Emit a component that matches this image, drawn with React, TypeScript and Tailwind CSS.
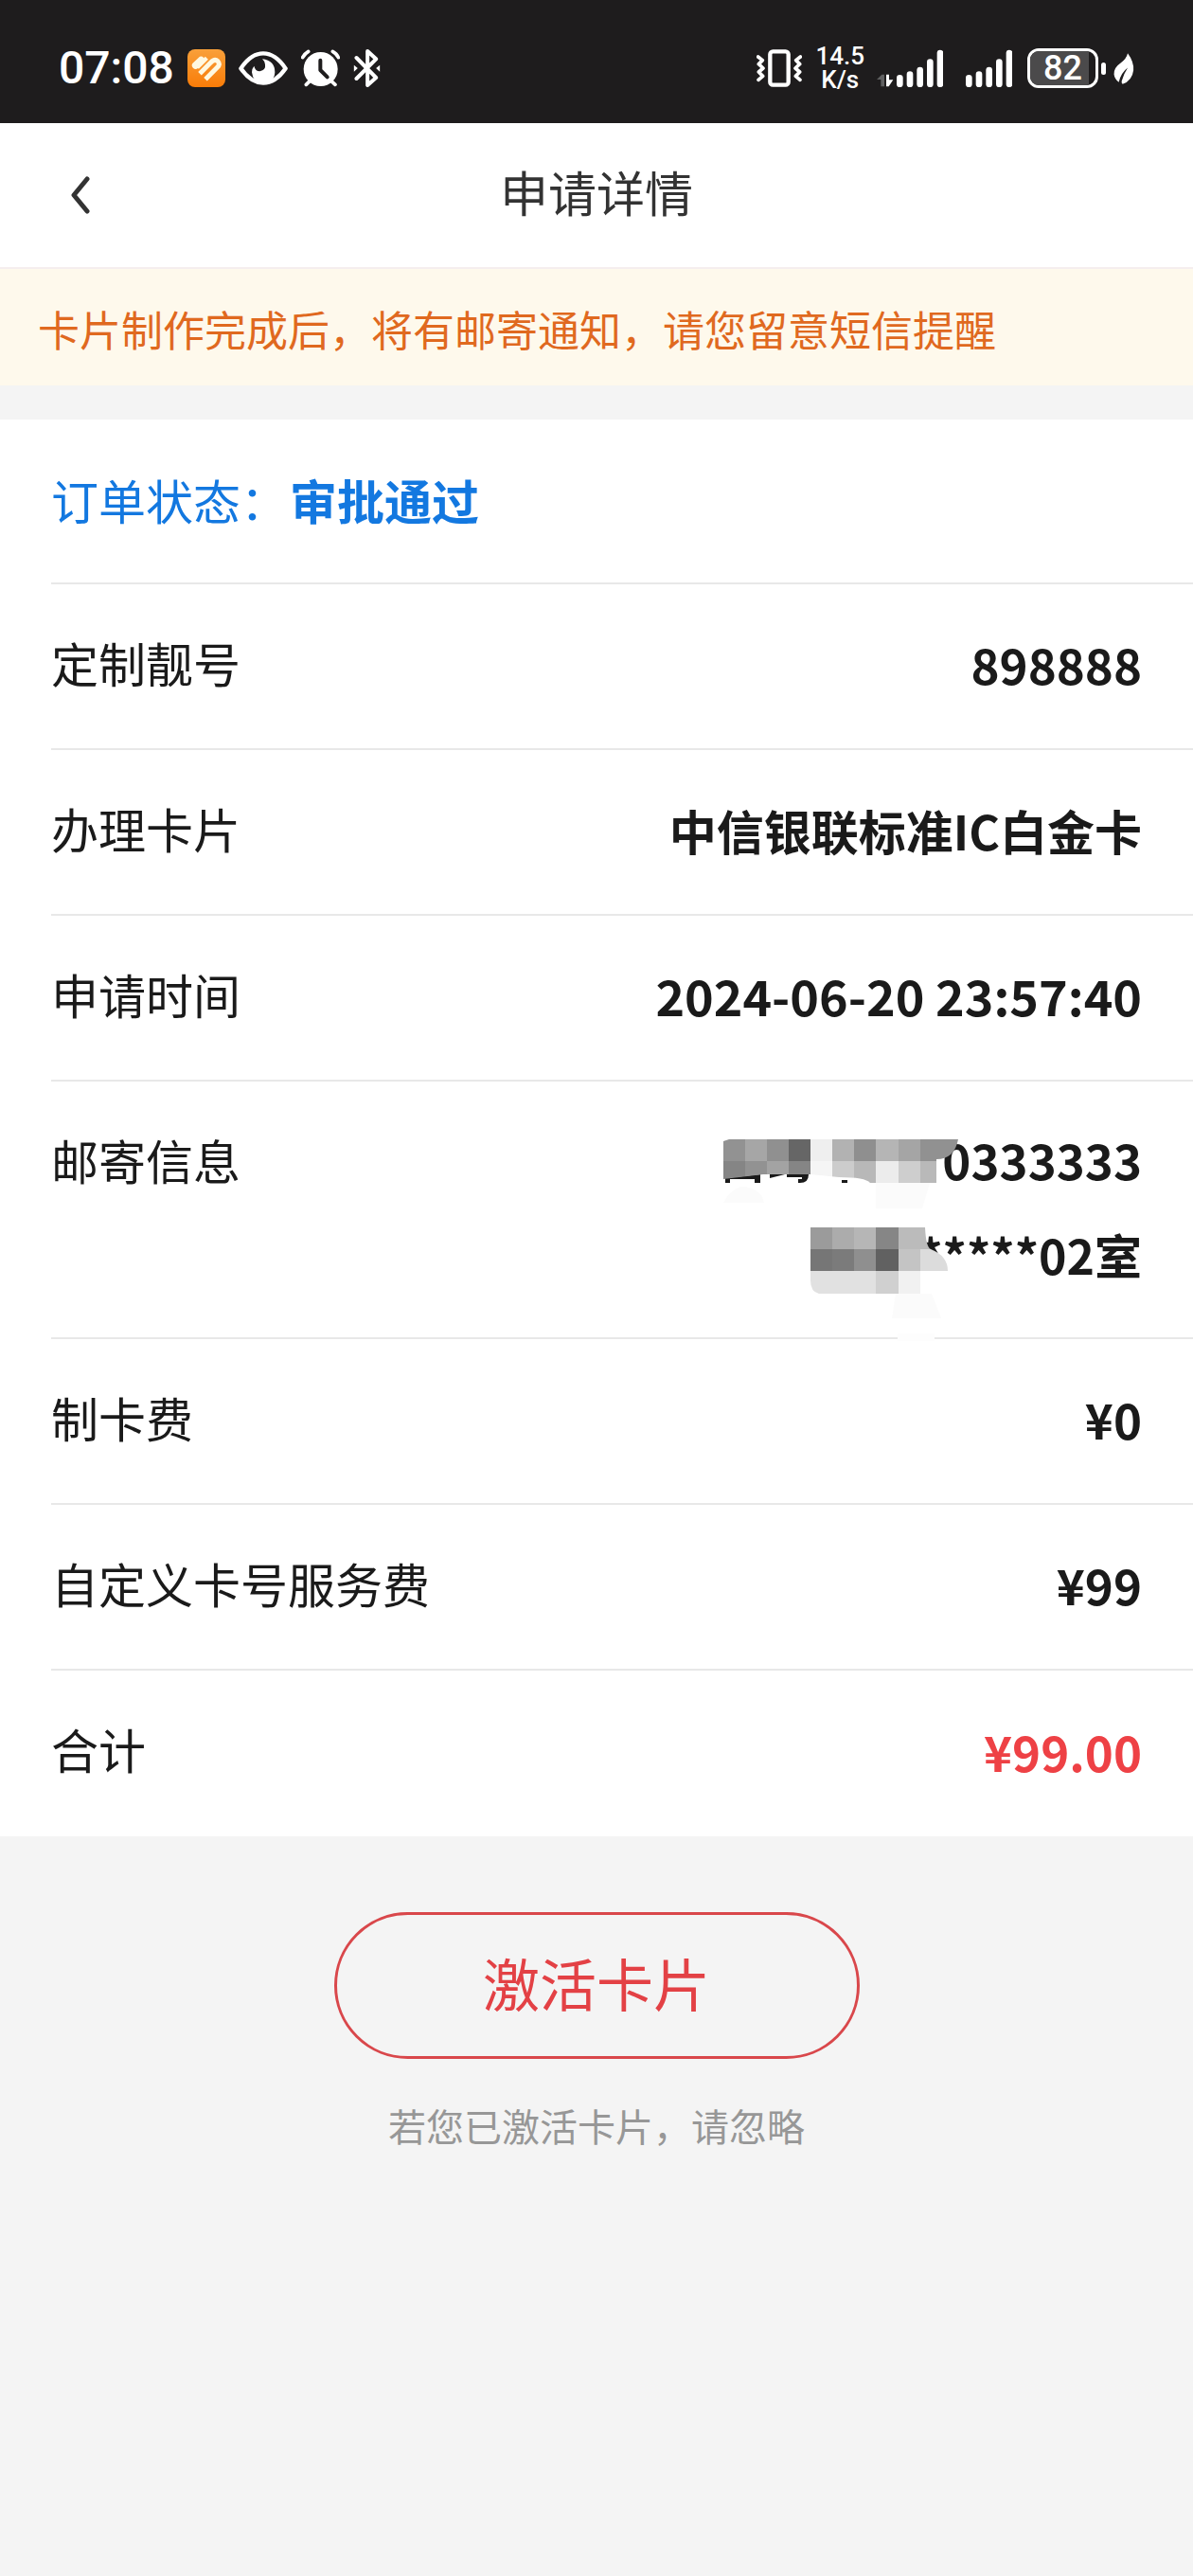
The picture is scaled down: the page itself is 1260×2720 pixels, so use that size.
import React from 'react';
import clsx from 'clsx';

const rows = [
  { label: '定制靓号', value: '898888', size: 'text-[51px]' },
  { label: '办理卡片', value: '中信银联标准IC白金卡', size: 'text-[50px]' },
  { label: '申请时间', value: '2024-06-20 23:57:40', size: 'text-[52px]' },
];

const fees = [
  { label: '制卡费', value: '¥0' },
  { label: '自定义卡号服务费', value: '¥99' },
  { label: '合计', value: '¥99.00', total: true },
];

const barTops = [147, 136, 122, 97, 68];

// Signal strength, with the optional data arrows in front
const Signal = ({ arrows = false }) => (
  <svg
    viewBox={arrows ? '435 66 213 120' : '501 66 147 120'}
    className={arrows ? 'w-[71px] h-10' : 'w-[49px] h-10'}
    aria-hidden="true"
  >
    {arrows && (
      <>
        <path d="M438 162 L454 146 H462 V184 H451 V162 Z" fill="#5f5f60" />
        <path d="M468 146 H477 V163 H490 L476 184 H468 Z" fill="#fff" />
      </>
    )}
    {barTops.map((top, index) => (
      <rect key={top} x={501 + index * 32} y={top} width="20" height={186 - top} rx="10" fill="#fff" />
    ))}
  </svg>
);

const StatusBar = () => (
  <div className="flex justify-between items-center h-[130px] pt-[14px] px-[62px] bg-[#1e1c1d] text-white font-['Roboto',sans-serif]">
    <div className="flex items-center gap-[14px]">
      <span className="text-[48px] leading-[50px] font-medium">07:08</span>
      {/* Health app */}
      <svg viewBox="468 66 120 120" className="w-10 h-10" aria-hidden="true">
        <defs>
          <linearGradient id="health" x1="0" y1="0" x2="0" y2="1">
            <stop offset="0" stopColor="#f9a03a" />
            <stop offset="1" stopColor="#f97c08" />
          </linearGradient>
        </defs>
        <rect x="468" y="66" width="120" height="120" rx="24" fill="url(#health)" />
        <g fill="none" stroke="#fff8e0" strokeLinejoin="round">
          <path d="M494 117 L511 101" strokeWidth="23" strokeLinecap="round" />
          <path d="M499 124 L529 94" strokeWidth="13" />
          <path d="M507 143 L541 109 Q554 95 564 104 Q573 113 562 124 L525 161" strokeWidth="15" />
        </g>
      </svg>
      {/* Eye comfort */}
      <svg viewBox="630 66 156 120" className="w-[52px] h-10" aria-hidden="true">
        <path
          d="M637 127 Q669 79 708 79 Q747 79 779 127 Q747 173 708 173 Q669 173 637 127 Z"
          fill="none"
          stroke="#fff"
          strokeWidth="13"
          strokeLinejoin="round"
        />
        <path d="M705 97 Q745 102 745 139 Q743 173 708 174 Q675 172 672 139 Q672 127 679 119 Q683 136 697 136 Q717 132 714 114 Q712 103 705 97 Z" fill="#fff" />
      </svg>
      {/* Alarm */}
      <svg viewBox="834 66 123 120" className="w-[41px] h-10" aria-hidden="true">
        <circle cx="896" cy="129" r="54" fill="#fff" />
        <path d="M839 92 Q845 80 857 73 M934 73 Q947 80 952 92 M862 166 L850 178 M929 166 L942 178" stroke="#fff" strokeWidth="11" strokeLinecap="round" fill="none" />
        <path d="M895 101 V132 L917 154" stroke="#1e1c1d" strokeWidth="12" strokeLinecap="round" strokeLinejoin="round" fill="none" />
      </svg>
      {/* Bluetooth */}
      <svg viewBox="1000 66 86 120" className="w-[29px] h-10" aria-hidden="true">
        <path d="M1010 93 L1072 156 L1045 180 V72 L1072 97 L1010 159" stroke="#fff" strokeWidth="12" strokeLinecap="round" strokeLinejoin="round" fill="none" />
        <path d="M1002 116 L1014 126 L1002 137 Z M1084 116 L1072 126 L1084 137 Z" fill="#fff" />
      </svg>
    </div>

    <div className="flex items-center">
      {/* Vibrate */}
      <svg viewBox="64 66 144 120" className="w-12 h-10 mr-[14px]" aria-hidden="true">
        <rect x="107" y="73" width="58" height="106" rx="9" fill="none" stroke="#fff" strokeWidth="13" />
        <path d="M69 90 L83 101 L71 113 L85 126 L71 138 L84 151 L70 163 M203 90 L189 101 L201 113 L187 126 L201 138 L188 151 L202 163" fill="none" stroke="#fff" strokeWidth="11" strokeLinecap="round" strokeLinejoin="round" />
      </svg>
      <div className="mr-3 text-center text-[26px] leading-[25px] font-medium">
        <div>14.5</div>
        <div>K/s</div>
      </div>
      <div className="flex items-center gap-6 mr-4">
        <Signal arrows />
        <Signal />
      </div>
      <div className="relative w-[75px] h-[42px] rounded-[12px] border-[3px] border-white overflow-hidden">
        <div className="absolute inset-y-0 left-0 w-[90%] bg-[#4b4a4b]" />
        <div className="relative text-center text-[36px] leading-9 font-medium">82</div>
      </div>
      <div className="w-[5px] h-[13px] ml-[3px] mr-2 rounded-full bg-white" />
      {/* Power saving leaf */}
      <svg viewBox="1186 76 64 98" className="w-[22px] h-[33px]" aria-hidden="true">
        <path d="M1230 77 Q1250 104 1248 130 Q1244 163 1214 173 Q1210 170 1211 164 Q1217 142 1230 122 Q1209 138 1202 167 Q1189 158 1187 143 Q1186 122 1207 108 Q1226 95 1230 77 Z" fill="#fff" />
      </svg>
    </div>
  </div>
);

// Mosaic over the private part of the mailing address
const Mosaic = () => (
  <svg viewBox="0 0 280 240" className="absolute top-[2px] right-[190px] w-[280px] h-[240px]" aria-hidden="true">
    <rect x="28" y="28" width="220" height="21" fill="#fff" />
    <g fill="#fbfbfb">
      <path d="M28 94 Q38 76 51 77 Q68 80 71 94 Z" />
      <path d="M189 73 H246 L238 100 H189 Z" />
      <path d="M210 190 H248 L258 216 H206 Z" />
    </g>
    <g fill="#1a1a1a">
      <path d="M30 68 L67 64 V73 H61 V69 H35 V73 H30 Z" />
      <path d="M77 64 L93 64 L77 68 Z M95 64 H118 Q118 74 107 73 V69 H111 V67 H95 Z" />
      <rect x="153" y="70" width="6" height="3" />
    </g>
    <clipPath id="blur1">
      <path d="M28 29 L34 27 H276 Q272 48 253 48 V73 H183 Q178 67 150 67 L120 64 H70 L28 69 Z" />
    </clipPath>
    <g clipPath="url(#blur1)">
      <rect x="28" y="27" width="23" height="23" fill="#929292" />
      <rect x="51" y="27" width="23" height="23" fill="#a6a6a6" />
      <rect x="74" y="27" width="23" height="23" fill="#909090" />
      <rect x="97" y="27" width="23" height="23" fill="#666" />
      <rect x="120" y="27" width="23" height="23" fill="#efefef" />
      <rect x="143" y="27" width="23" height="23" fill="#b2b2b2" />
      <rect x="166" y="27" width="23" height="23" fill="#8f8f8f" />
      <rect x="189" y="27" width="24" height="23" fill="#b5b5b5" />
      <rect x="213" y="27" width="23" height="23" fill="#a5a5a5" />
      <rect x="236" y="27" width="42" height="23" fill="#919191" />
      <rect x="28" y="50" width="23" height="23" fill="#858585" />
      <rect x="51" y="50" width="23" height="23" fill="#929292" />
      <rect x="74" y="50" width="23" height="23" fill="#a3a3a3" />
      <rect x="97" y="50" width="23" height="23" fill="#858585" />
      <rect x="120" y="50" width="23" height="23" fill="#f5f5f5" />
      <rect x="143" y="50" width="23" height="23" fill="#ccc" />
      <rect x="166" y="50" width="23" height="23" fill="#b8b8b8" />
      <rect x="189" y="50" width="24" height="23" fill="#ececec" />
      <rect x="213" y="50" width="23" height="23" fill="#cecece" />
      <rect x="236" y="50" width="17" height="23" fill="#b9b9b9" />
    </g>
    <clipPath id="blur2">
      <path d="M120 120 H241 Q242 141 247 143 Q265 150 265 166 H236 V190 H129 Q120 188 120 176 Z" />
    </clipPath>
    <g clipPath="url(#blur2)">
      <rect x="120" y="120" width="23" height="23" fill="#9b9b9b" />
      <rect x="143" y="120" width="23" height="23" fill="#acacac" />
      <rect x="166" y="120" width="23" height="23" fill="#b6b6b6" />
      <rect x="189" y="120" width="24" height="23" fill="#868686" />
      <rect x="213" y="120" width="34" height="23" fill="#bbb" />
      <rect x="120" y="143" width="23" height="23" fill="#767676" />
      <rect x="143" y="143" width="23" height="23" fill="#7b7b7b" />
      <rect x="166" y="143" width="23" height="23" fill="#8f8f8f" />
      <rect x="189" y="143" width="24" height="23" fill="#616161" />
      <rect x="213" y="143" width="23" height="23" fill="#c4c4c4" />
      <rect x="236" y="143" width="30" height="23" fill="#dcdcdc" />
      <rect x="120" y="166" width="69" height="24" fill="#e1e1e1" />
      <rect x="189" y="166" width="24" height="24" fill="#d0d0d0" />
      <rect x="213" y="166" width="23" height="24" fill="#f1f1f1" />
    </g>
    <rect x="212" y="232" width="39" height="8" fill="#fdfdfd" />
  </svg>
);

const Row = ({ label, children, last = false }) => (
  <div
    className={clsx(
      'flex justify-between items-center min-h-[175px] pt-8 pb-[38px] pr-[54px] leading-[100px]',
      !last && 'border-b-2 border-[#e8e8e8]'
    )}
  >
    <dt className="self-start">{label}</dt>
    <dd className="font-bold text-right">{children}</dd>
  </div>
);

const App = () => {
  return (
    <div className="min-h-screen bg-[#f4f4f4] text-[50px] text-[#1a1a1a] font-['Noto_Sans_CJK_SC',sans-serif]">
      <StatusBar />

      {/* Title */}
      <header className="grid grid-cols-[1fr_auto_1fr] items-center h-[154px] px-[62px] bg-white border-b-2 border-[#f5eeee] text-[#333]">
        <button type="button" aria-label="返回" className="justify-self-start p-3">
          <svg viewBox="0 0 22 40" className="w-[22px] h-10" fill="none" stroke="#333" strokeWidth="5" strokeLinecap="round" strokeLinejoin="round">
            <path d="M18 3 L4 20 L18 37" />
          </svg>
        </button>
        <h1 className="pb-2 text-[51px] leading-[72px]">申请详情</h1>
      </header>

      {/* Notice */}
      <p className="h-[123px] px-10 pt-1 bg-[#fef9ec] text-[44px] leading-[119px] text-[#e0691f]">
        卡片制作完成后，将有邮寄通知，请您留意短信提醒
      </p>

      {/* Order details */}
      <dl className="mt-9 pl-[54px] bg-white">
        <div className="flex items-center h-[174px] pb-1 gap-[2px] border-b-2 border-[#e8e8e8] text-[#1378e0]">
          <dt>订单状态：</dt>
          <dd className="font-bold">审批通过</dd>
        </div>
        {rows.map((row) => (
          <Row key={row.label} label={row.label}>
            <span className={row.size}>{row.value}</span>
          </Row>
        ))}
        <Row label="邮寄信息">
          <div className="relative">
            <div className="text-[51px]">*0333333</div>
            <div>*****02室</div>
            <Mosaic />
          </div>
        </Row>
        {fees.map((fee) => (
          <Row key={fee.label} label={fee.label} last={fee.total}>
            <span className={clsx('text-[51px]', fee.total && 'text-[#ee4145]')}>{fee.value}</span>
          </Row>
        ))}
      </dl>

      {/* Activate */}
      <div className="flex flex-col items-center pt-20">
        <button
          type="button"
          className="w-[555px] h-[155px] pb-2 rounded-full border-[3px] border-[#d9474b] text-[60px] text-[#e34145] cursor-pointer"
        >
          激活卡片
        </button>
        <p className="mt-10 text-[40px] leading-[60px] text-[#979797]">若您已激活卡片，请忽略</p>
      </div>
    </div>
  );
};

export default App;
